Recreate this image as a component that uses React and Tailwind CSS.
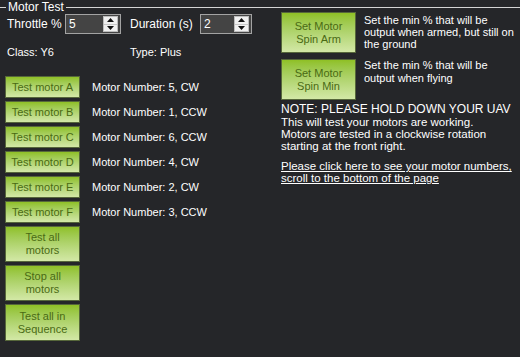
import React from 'react';

const font = { fontFamily: '"Liberation Sans", Arial, sans-serif' };

const btn =
  'w-[75px] shrink-0 flex items-center justify-center text-center border border-[#56673a] bg-gradient-to-b from-[#8fc024] to-[#d3e8a6] text-[#4a6a14] text-[11px] leading-[13px]';

const Spinner = ({ value, width }) => (
  <div className={`h-[20px] ${width} border border-[#a3a3a3] bg-[#444444] flex items-center`}>
    <span className="flex-1 pl-[3px] text-[12px] text-white">{value}</span>
    <div className="w-[15px] h-[16px] mr-[2px] flex flex-col bg-[#f0f0f0] border border-[#bdbdbd]">
      <div className="flex-1 flex items-center justify-center border-b border-[#c8c8c8]">
        <svg width="7" height="4" viewBox="0 0 7 4"><path d="M0 4 L3.5 0 L7 4 Z" fill="#111" /></svg>
      </div>
      <div className="flex-1 flex items-center justify-center">
        <svg width="7" height="4" viewBox="0 0 7 4"><path d="M0 0 L3.5 4 L7 0 Z" fill="#111" /></svg>
      </div>
    </div>
  </div>
);

const motors = [
  ['A', 'Motor Number: 5, CW'],
  ['B', 'Motor Number: 1, CCW'],
  ['C', 'Motor Number: 6, CCW'],
  ['D', 'Motor Number: 4, CW'],
  ['E', 'Motor Number: 2, CW'],
  ['F', 'Motor Number: 3, CCW'],
];

export default function App() {
  return (
    <div className="w-[520px] h-[357px] overflow-hidden bg-[#252629] text-white text-[11px] leading-[12px]" style={font}>
      {/* group box header */}
      <div className="flex items-start h-[12px]">
        <div className="w-[6px] h-px mt-[7px] bg-[#d4d4d4]" />
        <span className="px-[2px] leading-[14px] text-[12px]">Motor Test</span>
        <div className="flex-1 h-px mt-[7px] bg-[#d4d4d4]" />
      </div>

      <div className="flex">
        {/* left column */}
        <div className="w-[276px] pt-[2px]">
          <div className="flex items-center h-[20px]">
            <span className="ml-[7px] w-[58px] text-[12px]">Throttle %</span>
            <Spinner value="5" width="w-[56px]" />
            <span className="ml-[9px] w-[70px] text-[12px]">Duration (s)</span>
            <Spinner value="2" width="w-[52px]" />
          </div>

          <div className="flex items-center h-[14px] mt-[11px]">
            <span className="ml-[7px] w-[123px]">Class: Y6</span>
            <span>Type: Plus</span>
          </div>

          <div className="flex flex-col gap-[3px] mt-[17px] ml-[5px]">
            {motors.map(([l, t]) => (
              <div key={l} className="flex items-center">
                <div className={`${btn} h-[22px]`}>Test motor {l}</div>
                <span className="ml-[12px]">{t}</span>
              </div>
            ))}
            <div className={`${btn} h-[36px]`}>Test all<br />motors</div>
            <div className={`${btn} h-[36px]`}>Stop all<br />motors</div>
            <div className={`${btn} h-[37px]`}>Test all in<br />Sequence</div>
          </div>
        </div>

        {/* right column */}
        <div className="flex-1 pl-[5px]">
          <div className="flex">
            <div className={`${btn} h-[41px]`}>Set Motor<br />Spin Arm</div>
            <p className="ml-[8px] mt-[2px]">
              Set the min % that will be<br />output when armed, but still on<br />the ground
            </p>
          </div>
          <div className="flex mt-[6px]">
            <div className={`${btn} h-[41px]`}>Set Motor<br />Spin Min</div>
            <p className="ml-[8px] mt-[0px] leading-[13px]">
              Set the min % that will be<br />output when flying
            </p>
          </div>
          <p className="mt-[3px] text-[12px] leading-[13px]">NOTE: PLEASE HOLD DOWN YOUR UAV</p>
          <p className="text-[11.5px]">
            This will test your motors are working.<br />Motors are tested in a clockwise rotation<br />starting at the front right.
          </p>
          <p className="mt-[8px] underline text-[11.5px]">
            Please click here to see your motor numbers,<br />scroll to the bottom of the page
          </p>
        </div>
      </div>
    </div>
  );
}
